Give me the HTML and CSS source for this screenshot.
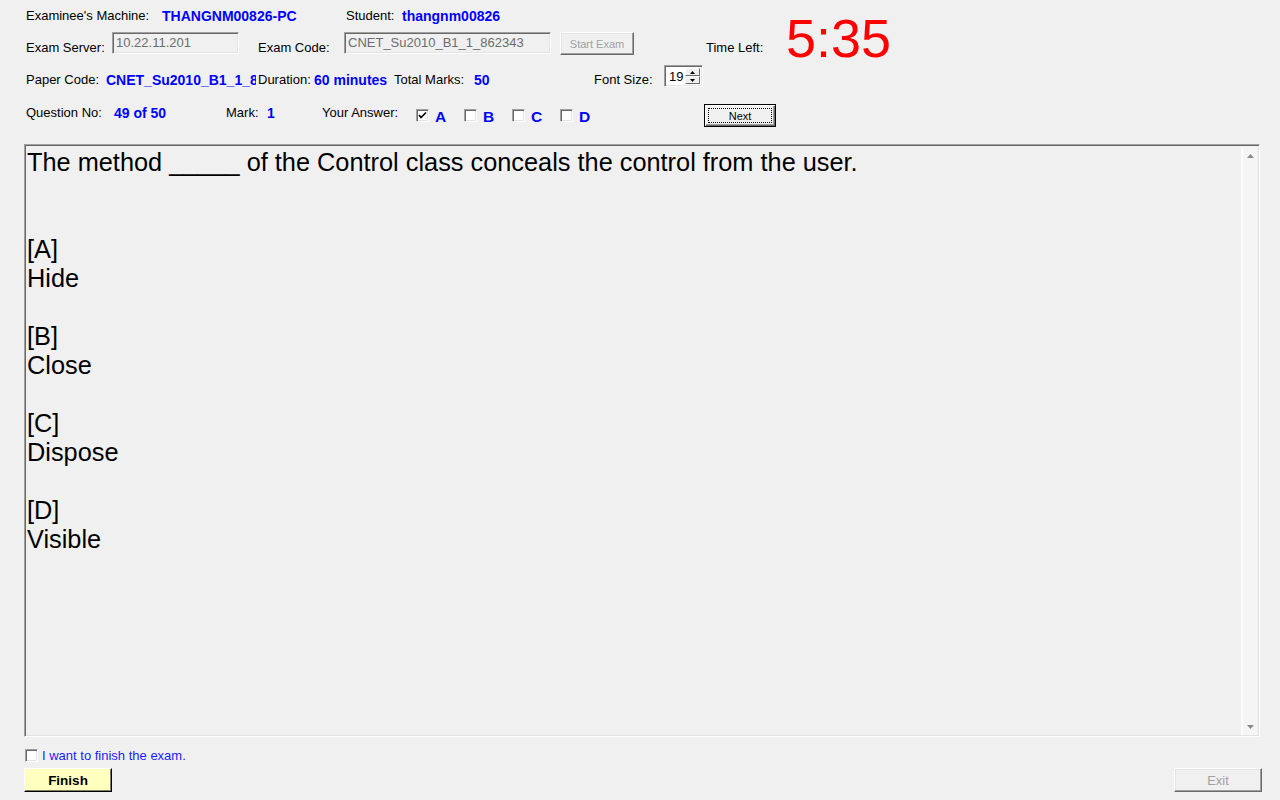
FILE: index.html
```html
<!DOCTYPE html>
<html>
<head>
<meta charset="utf-8">
<title>Exam</title>
<link rel="stylesheet" href="styles.css">
</head>
<body>
<div class="header">
  <div class="rows">
    <div class="row r1">
      <span class="lbl w136">Examinee's Machine:</span>
      <span class="val w184">THANGNM00826-PC</span>
      <span class="lbl w56">Student:</span>
      <span class="val">thangnm00826</span>
    </div>
    <div class="row r2">
      <span class="lbl low w86">Exam Server:</span>
      <div class="tbox sunken w127">10.22.11.201</div>
      <span class="lbl low w86 ml19">Exam Code:</span>
      <div class="tbox sunken w206">CNET_Su2010_B1_1_862343</div>
      <div class="btn raised disabled start">Start Exam</div>
      <span class="lbl low ml72">Time Left:</span>
    </div>
    <div class="row r3">
      <span class="lbl low w80">Paper Code:</span>
      <span class="val low w150 clip">CNET_Su2010_B1_1_862343</span>
      <span class="lbl low w56 ml2">Duration:</span>
      <span class="val low w80">60 minutes</span>
      <span class="lbl low w80">Total Marks:</span>
      <span class="val low w120">50</span>
      <span class="lbl low w70">Font Size:</span>
      <div class="spin sunken">
        <span class="spin-val">19</span>
        <div class="spin-btns">
          <div class="spin-b"><svg width="5" height="3" viewBox="0 0 5 3"><path d="M2.5 0 L5 3 L0 3 Z" fill="#000"/></svg></div>
          <div class="spin-b"><svg width="5" height="3" viewBox="0 0 5 3"><path d="M0 0 L5 0 L2.5 3 Z" fill="#000"/></svg></div>
        </div>
      </div>
    </div>
    <div class="row r4">
      <span class="lbl low w88">Question No:</span>
      <span class="val low w112">49 of 50</span>
      <span class="lbl low w41">Mark:</span>
      <span class="val low w55">1</span>
      <span class="lbl low w94">Your Answer:</span>
      <div class="opts">
        <div class="opt"><span class="cb sunken"><svg width="9" height="9" viewBox="0 0 9 9"><path d="M1 4 L3 6.5 L8 1.5" stroke="#000" stroke-width="1.6" fill="none"/></svg></span><span class="opt-l">A</span></div>
        <div class="opt"><span class="cb sunken"></span><span class="opt-l">B</span></div>
        <div class="opt"><span class="cb sunken"></span><span class="opt-l">C</span></div>
        <div class="opt"><span class="cb sunken"></span><span class="opt-l">D</span></div>
      </div>
      <div class="btn next"><span class="focus">Next</span></div>
    </div>
  </div>
  <div class="timer">5:35</div>
</div>

<div class="qbox">
  <div class="qtext">The method _____ of the Control class conceals the control from the user.<br><br><br>[A]<br>Hide<br><br>[B]<br>Close<br><br>[C]<br>Dispose<br><br>[D]<br>Visible</div>
  <div class="sbar">
    <svg class="arr" width="7" height="4" viewBox="0 0 7 4"><path d="M3.5 0 L7 4 L0 4 Z" fill="#8a8a8a"/></svg>
    <svg class="arr" width="7" height="4" viewBox="0 0 7 4"><path d="M0 0 L7 0 L3.5 4 Z" fill="#8a8a8a"/></svg>
  </div>
</div>

<div class="footer">
  <div class="finish-row">
    <span class="cb sunken"></span>
    <span class="finish-lbl">I want to finish the exam.</span>
  </div>
  <div class="btn-row">
    <div class="btn finish">Finish</div>
    <div class="btn raised disabled exit">Exit</div>
  </div>
</div>
</body>
</html>
```

FILE: styles.css
```css
html, body {
  margin: 0;
  padding: 0;
}
body {
  width: 1280px;
  height: 800px;
  overflow: hidden;
  background: #f0f0f0;
  font-family: "Liberation Sans", Arial, sans-serif;
  font-size: 13px;
  color: #000;
}

.header {
  display: flex;
  height: 144px;
}
.rows {
  width: 760px;
  padding-left: 26px;
  flex: none;
}
.row {
  display: flex;
  align-items: flex-start;
  white-space: nowrap;
}
.r1 { height: 32px; align-items: center; }
.r2 { height: 32px; }
.r3 { height: 32px; }
.r4 { height: 48px; }

.lbl, .val {
  flex: none;
  line-height: 16px;
}
.low { margin-top: 8px; }
.r4 .low { margin-top: 9px; }
.val {
  color: #0000ff;
  font-weight: bold;
  font-size: 14px;
}
.clip { overflow: hidden; }

.w41 { width: 41px; }
.w55 { width: 55px; }
.w56 { width: 56px; }
.w70 { width: 70px; }
.w80 { width: 80px; }
.w86 { width: 86px; }
.w88 { width: 88px; }
.w94 { width: 94px; }
.w112 { width: 112px; }
.w120 { width: 120px; }
.w136 { width: 136px; }
.w150 { width: 150px; }
.w184 { width: 184px; }
.ml2 { margin-left: 2px; }
.ml19 { margin-left: 19px; }
.ml72 { margin-left: 72px; }

.sunken {
  border: 1px solid;
  border-color: #a0a0a0 #ffffff #ffffff #a0a0a0;
  box-shadow: inset 1px 1px 0 #696969, inset -1px -1px 0 #e3e3e3;
  box-sizing: border-box;
}
.raised {
  border: 1px solid;
  border-color: #ffffff #696969 #696969 #ffffff;
  box-shadow: inset -1px -1px 0 #a0a0a0, inset 1px 1px 0 #e3e3e3;
  box-sizing: border-box;
}

.tbox {
  flex: none;
  height: 22px;
  line-height: 20px;
  padding-left: 3px;
  color: #6d6d6d;
  font-size: 13px;
  overflow: hidden;
  white-space: nowrap;
}
.w127 { width: 127px; }
.w206 { width: 207px; }

.btn {
  flex: none;
  display: flex;
  align-items: center;
  justify-content: center;
  box-sizing: border-box;
  font-size: 11px;
}
.disabled { color: #a0a0a0; }
.start {
  width: 74px;
  height: 23px;
  margin-left: 9px;
}

.spin {
  flex: none;
  width: 39px;
  height: 22px;
  margin-top: 1px;
  background: #fff;
  display: flex;
  align-items: stretch;
  padding: 2px 2px 2px 4px;
}
.spin-val {
  flex: 1;
  line-height: 17px;
  font-size: 13px;
}
.spin-btns {
  width: 15px;
  display: flex;
  flex-direction: column;
}
.spin-b {
  flex: 1;
  background: #f0f0f0;
  border: 1px solid;
  border-color: #ffffff #696969 #696969 #ffffff;
  display: flex;
  align-items: center;
  justify-content: center;
}

.opts {
  display: flex;
  margin-top: 13px;
  flex: none;
}
.opt {
  width: 48px;
  display: flex;
  align-items: center;
  height: 13px;
}
.cb {
  flex: none;
  width: 13px;
  height: 13px;
  background: #fff;
  display: inline-flex;
  align-items: center;
  justify-content: center;
}
.opt-l {
  margin-left: 6px;
  color: #0000ff;
  font-weight: bold;
  font-size: 15.5px;
  line-height: 13px;
  padding-top: 2px;
}
.next {
  width: 72px;
  height: 23px;
  margin-top: 8px;
  margin-left: 96px;
  border: 1px solid #000;
  box-shadow: inset 1px 1px 0 #fff, inset -1px -1px 0 #696969, inset -2px -2px 0 #a0a0a0;
  padding: 3px;
}
.focus {
  flex: 1;
  align-self: stretch;
  display: flex;
  align-items: center;
  justify-content: center;
  border: 1px dotted #000;
}

.timer {
  flex: none;
  margin-top: 11px;
  color: #ff0000;
  font-size: 54px;
  line-height: 1;
}

.qbox {
  margin-left: 24px;
  width: 1236px;
  height: 593px;
  display: flex;
  border: 1px solid;
  border-color: #a0a0a0 #ffffff #ffffff #a0a0a0;
  box-shadow: inset 1px 1px 0 #696969, inset -1px -1px 0 #e3e3e3;
  box-sizing: border-box;
  padding: 2px 2px 1px 2px;
}
.qtext {
  flex: 1;
  padding: 1px 0 0 0;
  font-size: 25.33px;
  line-height: 29px;
  color: #000;
}
.sbar {
  width: 14px;
  background: #f5f5f5;
  border-left: 2px solid #fcfcfc;
  display: flex;
  flex-direction: column;
  justify-content: space-between;
  align-items: center;
  padding: 7px 0 6px 0;
}

.footer {
  padding-top: 11px;
}
.finish-row {
  display: flex;
  align-items: center;
  height: 14px;
  padding-left: 25px;
}
.finish-lbl {
  margin-left: 4px;
  color: #1c1cff;
  font-size: 13px;
}
.btn-row {
  display: flex;
  justify-content: space-between;
  margin-top: 6px;
  padding: 0 18px 0 24px;
}
.finish {
  width: 88px;
  height: 24px;
  background: #ffffc0;
  border: 1px solid;
  border-color: #ffffff #000000 #000000 #ffffff;
  box-shadow: inset -1px -1px 0 #808060;
  font-weight: bold;
  font-size: 13.5px;
}
.exit {
  width: 88px;
  height: 24px;
  font-size: 13px;
}
```
